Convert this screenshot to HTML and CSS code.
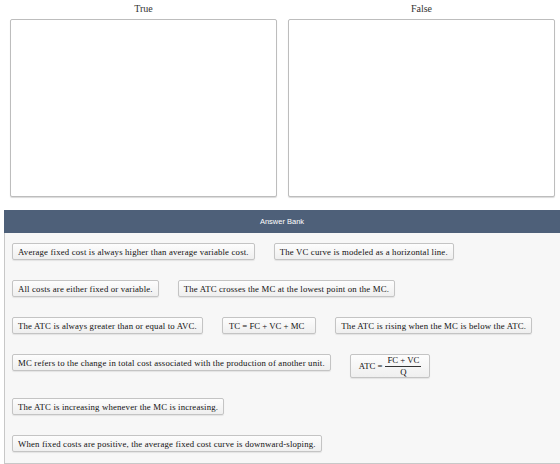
FILE: index.html
```html
<!DOCTYPE html>
<html lang="en">
<head>
  <meta charset="UTF-8" />
  <title>Cost Concepts: True or False</title>
  <link rel="stylesheet" href="styles.css">
</head>
<body>
  <div class="targets">
    <div class="column">
      <div class="column-title">True</div>
      <div class="dropzone"></div>
    </div>
    <div class="column">
      <div class="column-title">False</div>
      <div class="dropzone"></div>
    </div>
  </div>

  <div class="bank">
    <div class="bank-header">Answer Bank</div>
    <div class="bank-body">
      <div class="row">
        <span class="chip">Average fixed cost is always higher than average variable cost.</span>
        <span class="chip">The VC curve is modeled as a horizontal line.</span>
      </div>
      <div class="row">
        <span class="chip">All costs are either fixed or variable.</span>
        <span class="chip">The ATC crosses the MC at the lowest point on the MC.</span>
      </div>
      <div class="row">
        <span class="chip">The ATC is always greater than or equal to AVC.</span>
        <span class="chip wide">TC = FC + VC + MC</span>
        <span class="chip">The ATC is rising when the MC is below the ATC.</span>
      </div>
      <div class="row">
        <span class="chip">MC refers to the change in total cost associated with the production of another unit.</span>
        <span class="chip formula">
          ATC =
          <span class="frac">
            <span class="num">FC + VC</span>
            <span class="den">Q</span>
          </span>
        </span>
      </div>
      <div class="row">
        <span class="chip">The ATC is increasing whenever the MC is increasing.</span>
      </div>
      <div class="row">
        <span class="chip">When fixed costs are positive, the average fixed cost curve is downward-sloping.</span>
      </div>
    </div>
  </div>
</body>
</html>
```

FILE: styles.css
```css
body {
  margin: 0;
  font-family: "Liberation Serif", "Times New Roman", serif;
  color: #222;
  background: #fff;
  overflow: hidden;
}

/* true / false drop targets */
.targets {
  display: flex;
  gap: 11px;
  padding: 0 5px 0 10px;
}
.column {
  flex: 1;
}
.column-title {
  height: 19px;
  line-height: 17px;
  text-align: center;
  font-size: 10px;
  color: #333;
}
.dropzone {
  height: 176px;
  border: 1px solid #bdbdbd;
  border-radius: 2px;
  box-shadow: 0 1px 1px rgba(0, 0, 0, 0.15);
  background: #fff;
}

/* answer bank */
.bank {
  margin: 13px 0 0 4px;
}
.bank-header {
  height: 23px;
  line-height: 23px;
  background: #4e6079;
  color: #fff;
  text-align: center;
  font-family: "Liberation Sans", Arial, sans-serif;
  font-size: 7.5px;
}
.bank-body {
  background: #f7f7f7;
  border-left: 1px solid #c8c8c8;
  border-bottom: 1px solid #c8c8c8;
  padding: 10px 8px 0 7px;
  height: 220px;
  overflow: hidden;
}
.row {
  display: flex;
  align-items: flex-start;
  gap: 19px;
  margin-bottom: 20px;
}
.chip {
  display: inline-flex;
  align-items: center;
  height: 15px;
  padding: 0 5px;
  font-size: 8.75px;
  letter-spacing: 0.17px;
  color: #111;
  white-space: nowrap;
  background: linear-gradient(#fdfdfd, #efefef);
  border: 1px solid #c4c4c4;
  border-radius: 2px;
  box-shadow: 0 1px 1px rgba(0, 0, 0, 0.08);
}
.chip.wide {
  padding: 0 11px 0 6px;
  letter-spacing: 0;
}
.chip.formula {
  height: 22px;
  padding: 0 8px;
  gap: 3px;
  letter-spacing: 0;
}
.frac {
  display: inline-flex;
  flex-direction: column;
  align-items: center;
  line-height: 10px;
}
.num {
  padding: 0 2px 1px;
  border-bottom: 1px solid #333;
}
.den {
  padding-top: 0;
}
```
